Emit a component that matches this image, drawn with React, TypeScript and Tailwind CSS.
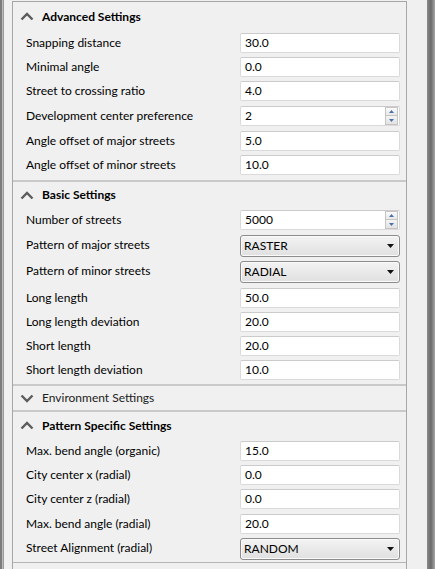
import React from "react";

const Chevron = ({ up }: { up: boolean }) => (
  <svg width="14" height="9" viewBox="0 0 14 9" className="shrink-0">
    {up ? (
      <polyline points="1.5,7.5 7,2 12.5,7.5" fill="none" stroke="#5c5c5c" strokeWidth="2.4" />
    ) : (
      <polyline points="1.5,1.5 7,7 12.5,1.5" fill="none" stroke="#5c5c5c" strokeWidth="2.4" />
    )}
  </svg>
);

const Header = ({ title, up, h, bold = true }: { title: string; up: boolean; h: string; bold?: boolean }) => (
  <div className={`flex items-center pl-[7px] gap-[8px] ${h}`}>
    <Chevron up={up} />
    <span className={bold ? "font-bold text-black" : "text-[#222]"}>{title}</span>
  </div>
);

const Sep = () => <div className="h-[2px] bg-[#c9c9c9]" />;

type Kind = "text" | "spin" | "combo";

const Field = ({ kind, value }: { kind: Kind; value: string }) => {
  if (kind === "combo") {
    return (
      <div className="w-[160px] h-[22px] rounded-[3px] border border-[#8c8c8c] bg-gradient-to-b from-[#f3f3f3] to-[#e0e0e0] flex items-center pl-[3px] pr-[5px] shadow-[inset_0_0_0_1px_#fafafa]">
        <span className="flex-1">{value}</span>
        <svg width="7" height="4" viewBox="0 0 7 4">
          <polygon points="0,0 7,0 3.5,4" fill="#111" />
        </svg>
      </div>
    );
  }
  return (
    <div className="w-[160px] h-[20px] bg-white border border-[#dadada] border-t-[#cbcbcb] rounded-[2px] flex items-center pl-[4px]">
      <span className="flex-1">{value}</span>
      {kind === "spin" && (
        <div className="h-[18px] w-[13px] mr-[1px] flex flex-col">
          <div className="h-[9px] border border-[#c5c5c5] bg-gradient-to-b from-[#fbfbfb] to-[#e8e8e8] flex items-center justify-center">
            <svg width="5" height="3" viewBox="0 0 5 3">
              <polygon points="0,3 5,3 2.5,0" fill="#4d6fa8" />
            </svg>
          </div>
          <div className="h-[9px] border border-t-0 border-[#c5c5c5] bg-gradient-to-b from-[#f4f4f4] to-[#e2e2e2] flex items-center justify-center">
            <svg width="5" height="3" viewBox="0 0 5 3">
              <polygon points="0,0 5,0 2.5,3" fill="#4d6fa8" />
            </svg>
          </div>
        </div>
      )}
    </div>
  );
};

const Row = ({ label, value, kind = "text", h = "h-[24px]" }: { label: string; value: string; kind?: Kind; h?: string }) => (
  <div className={`flex items-start pl-[13px] pt-[2px] ${h}`}>
    <div className="w-[214px] h-[20px] flex items-center">{label}</div>
    <Field kind={kind} value={value} />
  </div>
);

export default function App() {
  return (
    <div
      className="w-[435px] h-[569px] bg-[#f0f0f0] flex text-[12px] text-black overflow-hidden"
      style={{ fontFamily: "Lato, 'Noto Sans', sans-serif" }}
    >
      <div className="w-[4px] h-full flex">
        <div className="w-[2px] bg-[#7c7c7c]" />
        <div className="w-[1px] bg-[#bdbdbd]" />
        <div className="w-[1px] bg-[#9a9a9a]" />
      </div>
      <div className="w-[8px]" />
      <div className="w-[395px] h-full pt-[1px]">
        <div className="h-full border-l border-t border-r border-[#a7a7a7] bg-[#f0f0f0] flex flex-col">
          <Header title="Advanced Settings" up h="h-[29px]" />
          <Row label="Snapping distance" value="30.0" />
          <Row label="Minimal angle" value="0.0" />
          <Row label="Street to crossing ratio" value="4.0" h="h-[25px]" />
          <Row label="Development center preference" value="2" kind="spin" h="h-[25px]" />
          <Row label="Angle offset of major streets" value="5.0" />
          <Row label="Angle offset of minor streets" value="10.0" />
          <div className="h-[3px]" />
          <Sep />
          <Header title="Basic Settings" up h="h-[26px]" />
          <Row label="Number of streets" value="5000" kind="spin" h="h-[25px]" />
          <Row label="Pattern of major streets" value="RASTER" kind="combo" h="h-[26px]" />
          <Row label="Pattern of minor streets" value="RADIAL" kind="combo" h="h-[27px]" />
          <Row label="Long length" value="50.0" />
          <Row label="Long length deviation" value="20.0" />
          <Row label="Short length" value="20.0" />
          <Row label="Short length deviation" value="10.0" />
          <div className="h-[2px]" />
          <Sep />
          <Header title="Environment Settings" up={false} bold={false} h="h-[24px]" />
          <Sep />
          <Header title="Pattern Specific Settings" up h="h-[27px]" />
          <Row label="Max. bend angle (organic)" value="15.0" />
          <Row label="City center x (radial)" value="0.0" />
          <Row label="City center z (radial)" value="0.0" h="h-[25px]" />
          <Row label="Max. bend angle (radial)" value="20.0" />
          <Row label="Street Alignment (radial)" value="RANDOM" kind="combo" h="h-[26px]" />
          <div className="h-[1px] bg-[#b5b5b5]" />
        </div>
      </div>
      <div className="w-[20px]" />
      <div className="w-[8px] h-full bg-gradient-to-r from-[#8a8a8a] via-[#6a6a6a] to-[#a8a8a8]" />
    </div>
  );
}
